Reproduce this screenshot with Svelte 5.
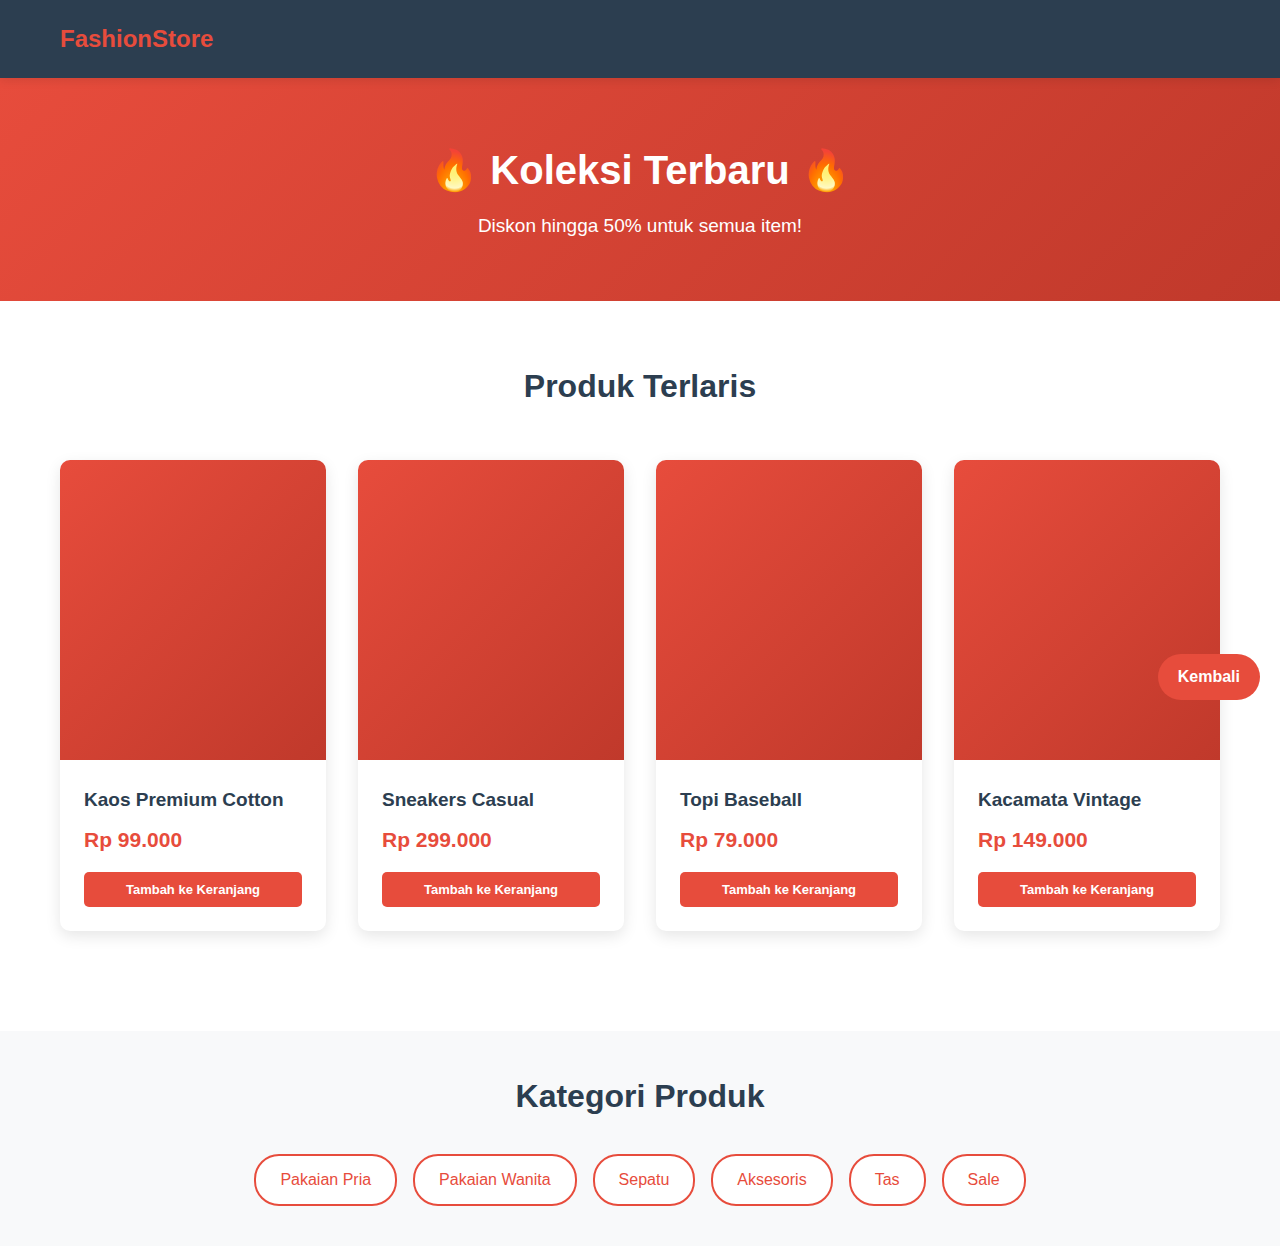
<script>
  const products = [
    { name: 'Kaos Premium Cotton', price: 'Rp 99.000' },
    { name: 'Sneakers Casual', price: 'Rp 299.000' },
    { name: 'Topi Baseball', price: 'Rp 79.000' },
    { name: 'Kacamata Vintage', price: 'Rp 149.000' }
  ];
  const categories = ['Pakaian Pria', 'Pakaian Wanita', 'Sepatu', 'Aksesoris', 'Tas', 'Sale'];
</script>

<header class="header">
  <div class="container">
    <div class="logo">FashionStore</div>
  </div>
</header>

<section class="hero">
  <h1>🔥 Koleksi Terbaru 🔥</h1>
  <p>Diskon hingga 50% untuk semua item!</p>
</section>

<main class="products">
  <div class="container">
    <h2>Produk Terlaris</h2>
    <div class="grid">
      {#each products as product}
        <article class="card">
          <div class="image"></div>
          <div class="info">
            <h3>{product.name}</h3>
            <div class="price">{product.price}</div>
            <button class="add" type="button">Tambah ke Keranjang</button>
          </div>
        </article>
      {/each}
    </div>
  </div>
</main>

<section class="categories">
  <h2>Kategori Produk</h2>
  <nav class="tags">
    {#each categories as category}
      <a class="tag" href="#kategori">{category}</a>
    {/each}
  </nav>
</section>

<a class="back" href="#kembali">Kembali</a>

<style>
  :global(body) {
    margin: 0;
    background: #fff;
    color: #333;
    font-family: 'Liberation Sans', Arial, sans-serif;
    font-size: 16px;
    line-height: 26px;
  }

  h1, h2, h3, p {
    margin: 0;
  }

  .container {
    max-width: 1160px;
    margin: 0 auto;
    padding: 0 20px;
  }

  .header {
    position: sticky;
    top: 0;
    z-index: 10;
    padding: 20px 0;
    background: #2c3e50;
    box-shadow: 0 2px 10px rgba(0, 0, 0, 0.1);
  }

  .logo {
    color: #e74c3c;
    font-size: 24px;
    font-weight: bold;
    line-height: 38px;
  }

  .hero {
    padding: 60px 20px;
    background: linear-gradient(135deg, #e74c3c, #c0392b);
    color: #fff;
    text-align: center;
  }

  .hero h1 {
    margin-bottom: 8px;
    font-size: 40px;
    line-height: 64px;
  }

  .hero p {
    font-size: 19px;
    line-height: 31px;
  }

  .products {
    padding: 60px 0 100px;
  }

  h2 {
    color: #2c3e50;
    font-size: 32px;
    line-height: 51px;
    text-align: center;
  }

  .products h2 {
    margin-bottom: 48px;
  }

  .grid {
    display: grid;
    grid-template-columns: repeat(auto-fit, minmax(250px, 1fr));
    gap: 32px;
  }

  .card {
    overflow: hidden;
    border-radius: 10px;
    background: #fff;
    box-shadow: 0 5px 15px rgba(0, 0, 0, 0.1);
  }

  .image {
    height: 300px;
    background: linear-gradient(135deg, #e74c3c, #c0392b);
  }

  .info {
    padding: 24px;
  }

  .info h3 {
    margin-bottom: 8px;
    color: #2c3e50;
    font-size: 19px;
    line-height: 31px;
  }

  .price {
    margin-bottom: 16px;
    color: #e74c3c;
    font-size: 21px;
    font-weight: bold;
    line-height: 33px;
  }

  .add {
    display: block;
    width: 100%;
    padding: 10px;
    border: 0;
    border-radius: 5px;
    background: #e74c3c;
    color: #fff;
    font-family: inherit;
    font-size: 13px;
    font-weight: bold;
    line-height: 15px;
    cursor: pointer;
  }

  .categories {
    padding: 40px 20px;
    background: #f8f9fa;
  }

  .categories h2 {
    margin-bottom: 32px;
  }

  .tags {
    display: flex;
    flex-wrap: wrap;
    justify-content: center;
    gap: 16px;
  }

  .tag {
    padding: 11px 24px;
    border: 2px solid #e74c3c;
    border-radius: 25px;
    background: #fff;
    color: #e74c3c;
    text-decoration: none;
  }

  .back {
    position: fixed;
    top: 654px;
    right: 20px;
    z-index: 20;
    padding: 10px 20px;
    border-radius: 25px;
    background: #e74c3c;
    color: #fff;
    font-weight: bold;
    text-decoration: none;
  }
</style>
